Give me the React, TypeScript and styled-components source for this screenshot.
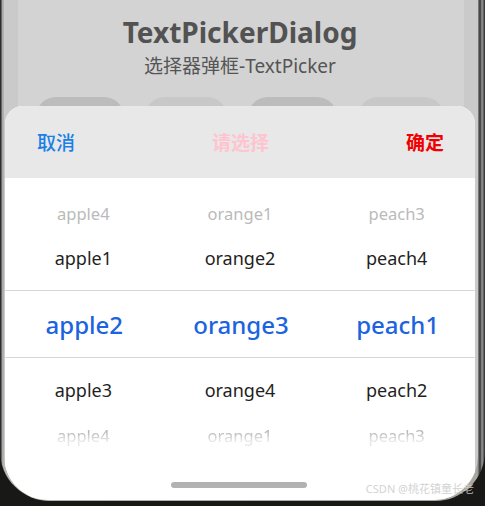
import * as React from 'react';
import styled, {createGlobalStyle, css} from "styled-components";

const GlobalStyle = createGlobalStyle`
    html, body {
        margin: 0;
        padding: 0;
        background: #171715;
    }
    * {
        box-sizing: border-box;
    }
    body {
        font-family: "Noto Sans", "Noto Sans CJK SC", sans-serif;
    }
`

type Tier = "far" | "near" | "current";

const columns = [
    ["apple4", "apple1", "apple2", "apple3", "apple4"],
    ["orange1", "orange2", "orange3", "orange4", "orange1"],
    ["peach3", "peach4", "peach1", "peach2", "peach3"],
];

const rows: { tier: Tier; side: "top" | "bottom" }[] = [
    {tier: "far", side: "top"},
    {tier: "near", side: "top"},
    {tier: "current", side: "top"},
    {tier: "near", side: "bottom"},
    {tier: "far", side: "bottom"},
];

const backButtons = [
    {width: 88, dark: true},
    {width: 82, dark: false},
    {width: 89, dark: true},
    {width: 86, dark: false},
];

export default function App() {
    return (
        <>
            <GlobalStyle/>
            <Device>
                <Bezel>
                    <Screen>
                        <Page>
                            <Title>TextPickerDialog</Title>
                            <Subtitle>选择器弹框-TextPicker</Subtitle>
                            <ButtonRow>
                                {backButtons.map((b, i) => (
                                    <BackButton key={i} $width={b.width} $dark={b.dark}/>
                                ))}
                            </ButtonRow>
                        </Page>

                        <Dialog>
                            <Header>
                                <Action $color="#1a7fe6">取消</Action>
                                <HeaderTitle>请选择</HeaderTitle>
                                <Action $color="#f00000" $bold>确定</Action>
                            </Header>
                            <Picker>
                                {rows.map((row, r) => (
                                    <PickerRow key={r} $tier={row.tier} $side={row.side}>
                                        {columns.map((col, c) => (
                                            <Cell key={c} $tier={row.tier} $side={row.side}>{col[r]}</Cell>
                                        ))}
                                    </PickerRow>
                                ))}
                            </Picker>
                        </Dialog>

                        <HomeBar/>
                    </Screen>
                </Bezel>
                <Watermark>CSDN @桃花镇童长老</Watermark>
            </Device>
        </>
    );
}

const Device = styled.div`
    position: relative;
    width: 485px;
    height: 506px;
    overflow: hidden;
    background: #181816;
`

const Bezel = styled.div`
    height: 501px;
    padding: 0 7px 1px 4px;
    border-radius: 0 0 50px 50px;
    background: linear-gradient(90deg,
    #2d2d2d 0px, #2d2d2d 1px, #a3a3a3 2px, #b8b7b0 4px,
    #a9a79e calc(100% - 8px), #8e8e8e calc(100% - 7px),
    #303030 calc(100% - 5px), #9a9a9a calc(100% - 3px), #2a2a2a 100%);
`

const Screen = styled.div`
    position: relative;
    height: 100%;
    overflow: hidden;
    padding: 0 14px;
    background: #cacaca;
    border-radius: 0 0 44px 44px;
`

const Page = styled.div`
    height: 100%;
    background: #d3d3d3;
    padding: 14px 20px 0 18px;
    display: flex;
    flex-direction: column;
    align-items: center;
`

const Title = styled.h1`
    margin: 0;
    font-size: 28px;
    line-height: 36px;
    font-weight: 700;
    color: #525252;
`

const Subtitle = styled.p`
    margin: 4px 0 0;
    font-size: 19px;
    line-height: 24px;
    color: #555;
`

const ButtonRow = styled.div`
    margin-top: 19px;
    width: 100%;
    display: flex;
    justify-content: space-between;
`

const BackButton = styled.div<{ $width: number; $dark: boolean }>`
    width: ${p => p.$width}px;
    height: 40px;
    border-radius: 20px;
    background: ${p => p.$dark ? "#bcbcbc" : "#c8c8c8"};
`

const Dialog = styled.div`
    position: absolute;
    top: 106px;
    left: 1px;
    right: 3px;
    bottom: 0;
    background: #fff;
    border-radius: 18px 18px 0 0;
    overflow: hidden;
`

const Header = styled.div`
    height: 72px;
    background: #e8e8e8;
    display: flex;
    align-items: center;
    justify-content: space-between;
    padding: 0 31px 0 32px;
`

const Action = styled.span<{ $color: string; $bold?: boolean }>`
    font-size: 19px;
    font-weight: ${p => p.$bold ? 700 : 500};
    color: ${p => p.$color};
`

const HeaderTitle = styled.span`
    font-size: 19px;
    font-weight: 700;
    color: #ffc4cf;
`

const Picker = styled.div`
    padding-top: 13px;
`

const tierHeights: Record<Tier, number> = {far: 44, near: 55, current: 68};

const PickerRow = styled.div<{ $tier: Tier; $side: "top" | "bottom" }>`
    display: grid;
    grid-template-columns: repeat(3, 1fr);
    height: ${p => tierHeights[p.$tier]}px;
    ${p => p.$tier === "near" && css`
        padding: ${p.$side === "top" ? "0 0 9px" : "9px 0 0"};
    `}
    ${p => p.$tier === "current" && css`
        border-top: 1px solid #d6d6d6;
        border-bottom: 1px solid #d6d6d6;
    `}
`

const Cell = styled.div<{ $tier: Tier; $side: "top" | "bottom" }>`
    display: flex;
    align-items: center;
    justify-content: center;
    padding-left: ${p => p.$tier === "current" ? 2 : 0}px;
    font-size: ${p => p.$tier === "far" ? 16.5 : p.$tier === "near" ? 18 : 24}px;
    font-weight: ${p => p.$tier === "current" ? 500 : 400};
    color: ${p => p.$tier === "far" ? "#bababa" : p.$tier === "near" ? "#1f1f1f" : "#1b63e0"};
    ${p => p.$tier === "far" && p.$side === "bottom" && css`
        -webkit-mask-image: linear-gradient(180deg, #000 45%, rgba(0, 0, 0, 0.35) 62%);
        mask-image: linear-gradient(180deg, #000 45%, rgba(0, 0, 0, 0.35) 62%);
    `}
`

const HomeBar = styled.div`
    position: absolute;
    left: 50%;
    bottom: 12px;
    width: 136px;
    height: 6px;
    margin-left: -70px;
    border-radius: 3px;
    background: #b2b2b2;
`

const Watermark = styled.span`
    position: absolute;
    right: 11px;
    bottom: 10px;
    font-size: 11px;
    line-height: 14px;
    color: rgba(205, 205, 205, 0.9);
`
